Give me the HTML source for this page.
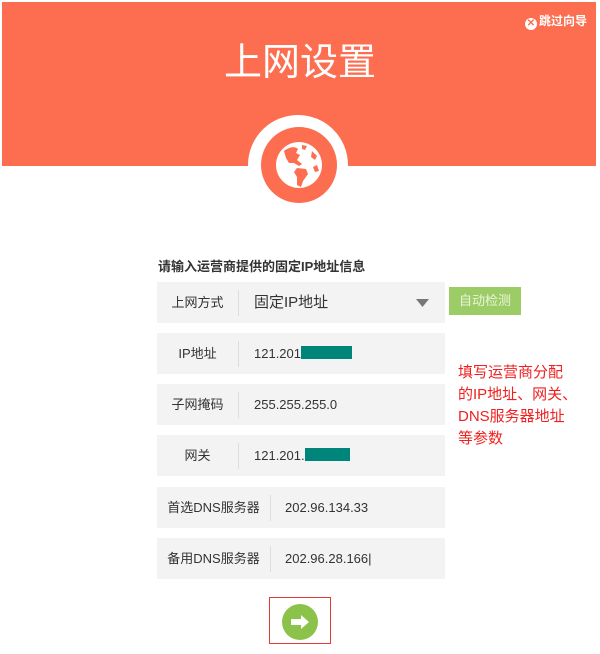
<!DOCTYPE html>
<html><head><meta charset="utf-8"><style>
*{margin:0;padding:0;box-sizing:border-box}
body{width:600px;height:654px;background:#fff;position:relative;overflow:hidden;font-family:"Liberation Sans","Noto Sans CJK SC",sans-serif}
.hdr{position:absolute;left:2px;top:2px;width:594px;height:164px;background:#fd6e50}
.title{position:absolute;left:0;width:600px;top:31px;text-align:center;color:#fff;font-size:38px}
.skip{position:absolute;right:13px;top:12px;color:#fff;font-size:12px;font-weight:bold}
.skip b{display:inline-block;width:12px;height:12px;border-radius:50%;background:#fff;color:#fd6e50;font-size:10px;line-height:12px;text-align:center;vertical-align:-1px;margin-right:2px}
.c1{position:absolute;left:248px;top:115px;width:100px;height:100px;border-radius:50%;background:#fff}
.c2{position:absolute;left:261px;top:127px;width:76px;height:76px;border-radius:50%;background:#fd6e50}
.lbl{position:absolute;left:158px;top:256px;font-size:13px;color:#333;font-weight:bold}
.row{position:absolute;left:157px;width:288px;height:41px;background:#f3f3f3;font-size:13px;color:#333}
.row .k{position:absolute;left:0;top:0;height:41px;line-height:41px;text-align:center}
.row .sep{position:absolute;top:8px;width:1px;height:26px;background:#ddd}
.row .v{position:absolute;top:0;line-height:41px}
.btn{position:absolute;left:449px;top:287px;width:72px;height:28px;background:#9ccc65;color:#eaf5dc;font-size:13px;line-height:28px;text-align:center}
.red{position:absolute;left:458px;top:362px;color:#f02020;font-size:15px;line-height:22px}
.box{position:absolute;left:269px;top:597px;width:62px;height:47px;border:1.5px solid #e53935}
.go{position:absolute;left:282px;top:604px;width:36px;height:36px;border-radius:50%;background:#8bc34a}
</style></head><body>
<div class="hdr"></div>
<div class="title">上网设置</div>
<div class="skip"><b>✕</b>跳过向导</div>
<div class="c1"></div><div class="c2"></div>
<svg style="position:absolute;left:275px;top:141px" width="48" height="48" viewBox="0 0 48 48">
<circle cx="24" cy="24" r="23" fill="#fff"/>
<path d="M9 10 C14 6 20 5 23 8 L21 12 L25 14 L22 19 L27 23 L24 25 L19 22 L14 22 L11 17 Z" fill="#fd6e50"/>
<path d="M27 4 L32 5 L30 9 L27 8 Z M37 10 L42 15 L40 19 L36 16 Z" fill="#fd6e50"/>
<path d="M22 27 L31 28 L33 33 L28 40 L26 46 L22 44 L22 36 L19 31 Z" fill="#fd6e50"/>
<path d="M38 26 L42 24 L44 30 L40 31 Z" fill="#fd6e50"/>
</svg>
<div class="lbl">请输入运营商提供的固定IP地址信息</div>
<div class="row" style="top:282px"><div class="k" style="width:81px">上网方式</div><div class="sep" style="left:81px"></div><div class="v" style="left:97px;font-size:15px">固定IP地址</div>
<svg style="position:absolute;left:259px;top:17px" width="13" height="8"><path d="M0 0H13L6.5 8Z" fill="#777"/></svg></div>
<div class="btn">自动检测</div>
<div class="row" style="top:333px"><div class="k" style="width:81px">IP地址</div><div class="sep" style="left:81px"></div><div class="v" style="left:97px">121.201<span style="display:inline-block;width:51px;height:13px;background:#00857a;vertical-align:-1px"></span></div></div>
<div class="row" style="top:384px"><div class="k" style="width:81px">子网掩码</div><div class="sep" style="left:81px"></div><div class="v" style="left:97px">255.255.255.0</div></div>
<div class="row" style="top:435px"><div class="k" style="width:81px">网关</div><div class="sep" style="left:81px"></div><div class="v" style="left:97px">121.201.<span style="display:inline-block;width:45px;height:13px;background:#00857a;vertical-align:-1px"></span></div></div>
<div class="row" style="top:487px"><div class="k" style="width:113px">首选DNS服务器</div><div class="sep" style="left:113px"></div><div class="v" style="left:128px">202.96.134.33</div></div>
<div class="row" style="top:538px"><div class="k" style="width:113px">备用DNS服务器</div><div class="sep" style="left:113px"></div><div class="v" style="left:128px">202.96.28.166|</div></div>
<div class="red">填写运营商分配<br>的IP地址、网关、<br>DNS服务器地址<br>等参数</div>
<div class="box"></div>
<div class="go"></div>
<svg style="position:absolute;left:290px;top:614px" width="20" height="16"><path d="M1 5H11V1L19 8L11 15V11H1Z" fill="#fff"/></svg>
</body></html>
